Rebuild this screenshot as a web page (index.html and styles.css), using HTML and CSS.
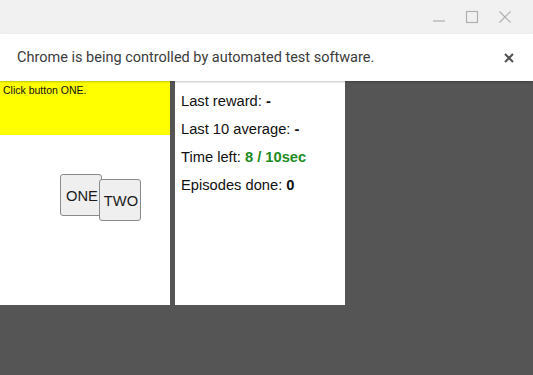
FILE: index.html
```html
<!DOCTYPE html>
<html lang="en">
  <head>
    <title>Click button</title>
    <meta charset="utf-8" />
    <link rel="stylesheet" href="styles.css">
  </head>
  <body>
    <div id="titlebar">
      <svg class="ctl" width="14" height="14" viewBox="0 0 14 14">
        <path d="M1 11 H13" stroke="#b0b0b0" stroke-width="1.2" />
      </svg>
      <svg class="ctl" width="14" height="14" viewBox="0 0 14 14">
        <rect x="1.5" y="1.5" width="11" height="11" fill="none" stroke="#b0b0b0" stroke-width="1.2" />
      </svg>
      <svg class="ctl" width="14" height="14" viewBox="0 0 14 14">
        <path d="M1.5 1.5 L12.5 12.5 M12.5 1.5 L1.5 12.5" stroke="#b0b0b0" stroke-width="1.2" />
      </svg>
    </div>

    <div id="infobar">
      <span class="msg">Chrome is being controlled by automated test software.</span>
      <svg class="close" width="10" height="10" viewBox="0 0 10 10">
        <path d="M1 1 L9 9 M9 1 L1 9" stroke="#505050" stroke-width="2" />
      </svg>
    </div>

    <div id="page">
      <div id="wrap">
        <div id="query">Click button ONE.</div>
        <div id="area">
          <button class="btn" style="left:60px; top:39px">ONE</button>
          <button class="btn" style="left:99px; top:44px">TWO</button>
        </div>
      </div>

      <div id="reward-display">
        <div class="info">Last reward: <b>-</b></div>
        <div class="info">Last 10 average: <b>-</b></div>
        <div class="info">Time left: <b class="timer">8 / 10sec</b></div>
        <div class="info">Episodes done: <b>0</b></div>
      </div>
    </div>
  </body>
</html>
```

FILE: styles.css
```css
html {
  height: 100%;
}
body {
  margin: 0;
  padding: 0;
  height: 100%;
  display: flex;
  flex-direction: column;
  background: #555555;
  font-family: "Liberation Sans", Arial, sans-serif;
}

#titlebar {
  height: 34px;
  background: #f1f1f1;
  display: flex;
  justify-content: flex-end;
  align-items: center;
  gap: 19px;
  padding-right: 21px;
  flex-shrink: 0;
}

#infobar {
  height: 47px;
  background: #ffffff;
  display: flex;
  align-items: center;
  justify-content: space-between;
  padding: 0 19px 0 17px;
  box-shadow: 0 1px 2px rgba(0, 0, 0, 0.25);
  position: relative;
  z-index: 1;
  flex-shrink: 0;
}

.msg {
  font-family: Roboto, sans-serif;
  font-size: 14.5px;
  color: #3c3c3c;
}

#page {
  display: flex;
  gap: 5px;
  align-items: flex-start;
}

#wrap {
  width: 170px;
  height: 224px;
  background: #ffffff;
  display: flex;
  flex-direction: column;
}

#query {
  height: 54px;
  background: #ffff00;
  font-size: 10.5px;
  padding: 3px 3px 0;
  box-sizing: border-box;
  color: #111;
}

#area {
  position: relative;
  flex: 1;
}

.btn {
  position: absolute;
  width: 42px;
  height: 42px;
  padding: 2px 0 0 2px;
  margin: 0;
  background: #efefef;
  border: 1px solid #8a8a8a;
  border-radius: 3px;
  font-family: "Liberation Sans", Arial, sans-serif;
  font-size: 14.7px;
  color: #1a1a1a;
  overflow: hidden;
}

#reward-display {
  width: 170px;
  height: 224px;
  background: #ffffff;
  padding: 6px 0 0 6px;
  box-sizing: border-box;
}

.info {
  font-size: 14.7px;
  line-height: 28px;
  color: #111;
}

.timer {
  color: #1e8c1e;
}
```
